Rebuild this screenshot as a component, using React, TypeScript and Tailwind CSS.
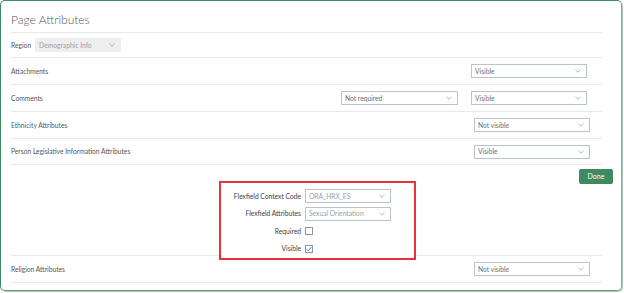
import React from "react";

const font = { fontFamily: "Lato, 'Open Sans', sans-serif" };

function Chevron() {
  return (
    <svg width="6" height="4" viewBox="0 0 6 4" className="shrink-0">
      <polyline points="0.5,0.8 3,3.2 5.5,0.8" fill="none" stroke="#8a949c" strokeWidth="0.7" />
    </svg>
  );
}

function Select({ value, w, grey = false, muted = false }: { value: string; w: string; grey?: boolean; muted?: boolean }) {
  return (
    <div
      className={`${w} h-[14px] flex items-center justify-between pl-[3px] pr-[5px] border ${
        grey ? "bg-[#eceef0] border-[#eceef0]" : "bg-white border-[#b9c3ca]"
      }`}
    >
      <span className={`text-[6.7px] leading-none whitespace-nowrap ${muted ? "text-[#9aa0a6]" : "text-[#6b6f73]"}`}>{value}</span>
      <Chevron />
    </div>
  );
}

function Row({ label, h, children }: { label: string; h: string; children?: React.ReactNode }) {
  return (
    <div className={`${h} w-[591px] flex items-center border-b border-[#e6eaed]`}>
      <span className="text-[6.7px] leading-none whitespace-nowrap text-[#54575a]">{label}</span>
      <div className="ml-auto flex items-center">{children}</div>
    </div>
  );
}

export default function App() {
  return (
    <div style={font} className="w-[624px] h-[293px] bg-white">
      <div className="w-[622px] h-[291px] border border-[#3d8b5f] border-r-[#7fae94] border-b-[#5f9c7a] rounded-[5px] pl-[10px] shadow-[1px_1px_1px_#a9c4b5]">
        <div className="h-[32px] w-[591px] border-b border-[#e6eaed] pt-[5px]">
          <span className="text-[12px] leading-[16px] font-light text-[#55585b]">Page Attributes</span>
        </div>
        <div className="h-[25px] w-[591px] flex items-center border-b border-[#e6eaed] gap-[4px]">
          <span className="text-[6.7px] leading-none text-[#54575a]">Region</span>
          <Select value="Demographic Info" w="w-[86px]" grey muted />
        </div>
        <Row label="Attachments" h="h-[27px]">
          <div className="mr-[15px]">
            <Select value="Visible" w="w-[116px]" />
          </div>
        </Row>
        <Row label="Comments" h="h-[27px]">
          <div className="mr-[15px] flex gap-[13px]">
            <Select value="Not required" w="w-[117px]" />
            <Select value="Visible" w="w-[116px]" />
          </div>
        </Row>
        <Row label="Ethnicity Attributes" h="h-[27px]">
          <div className="mr-[12px]">
            <Select value="Not visible" w="w-[116px]" />
          </div>
        </Row>
        <Row label="Person Legislative Information Attributes" h="h-[26px]">
          <div className="mr-[12px]">
            <Select value="Visible" w="w-[116px]" />
          </div>
        </Row>
        <div className="h-[91px] w-[591px] flex items-start border-b border-[#e6eaed]">
          <div className="ml-[208px] mt-[16px] w-[197px] h-[79px] bg-white pl-[15px] pt-[6px] border-2 border-solid border-[#e8313b]">
            <div className="grid grid-cols-[65px_86px] gap-x-[4px] gap-y-[3.5px] text-[6.7px] leading-none text-[#3e4144]">
              <div className="h-[14px] flex items-center justify-end whitespace-nowrap">Flexfield Context Code</div>
              <Select value="ORA_HRX_ES" w="w-[86px]" muted />
              <div className="h-[14px] flex items-center justify-end whitespace-nowrap">Flexfield Attributes</div>
              <Select value="Sexual Orientation" w="w-[86px]" muted />
              <div className="h-[14px] flex items-center justify-end">Required</div>
              <div className="h-[14px] flex items-center">
                <div className="w-[8px] h-[8px] border border-[#8e969c] bg-white" />
              </div>
              <div className="h-[14px] flex items-center justify-end">Visible</div>
              <div className="h-[14px] flex items-center">
                <div className="w-[8px] h-[8px] border border-[#8e969c] bg-white flex items-center justify-center">
                  <svg width="7" height="6" viewBox="0 0 7 6">
                    <polyline points="0.8,3.2 2.6,5 6.3,0.8" fill="none" stroke="#1f6fd6" strokeWidth="1.1" />
                  </svg>
                </div>
              </div>
            </div>
          </div>
          <div className="ml-auto -mr-[11px] mt-[4px] w-[34px] h-[15px] rounded-[2px] bg-[#3f8a60] flex items-center justify-center">
            <span className="text-[7px] leading-none text-white">Done</span>
          </div>
        </div>
        <Row label="Religion Attributes" h="h-[27px]">
          <div className="mr-[12px]">
            <Select value="Not visible" w="w-[116px]" />
          </div>
        </Row>
      </div>
    </div>
  );
}
